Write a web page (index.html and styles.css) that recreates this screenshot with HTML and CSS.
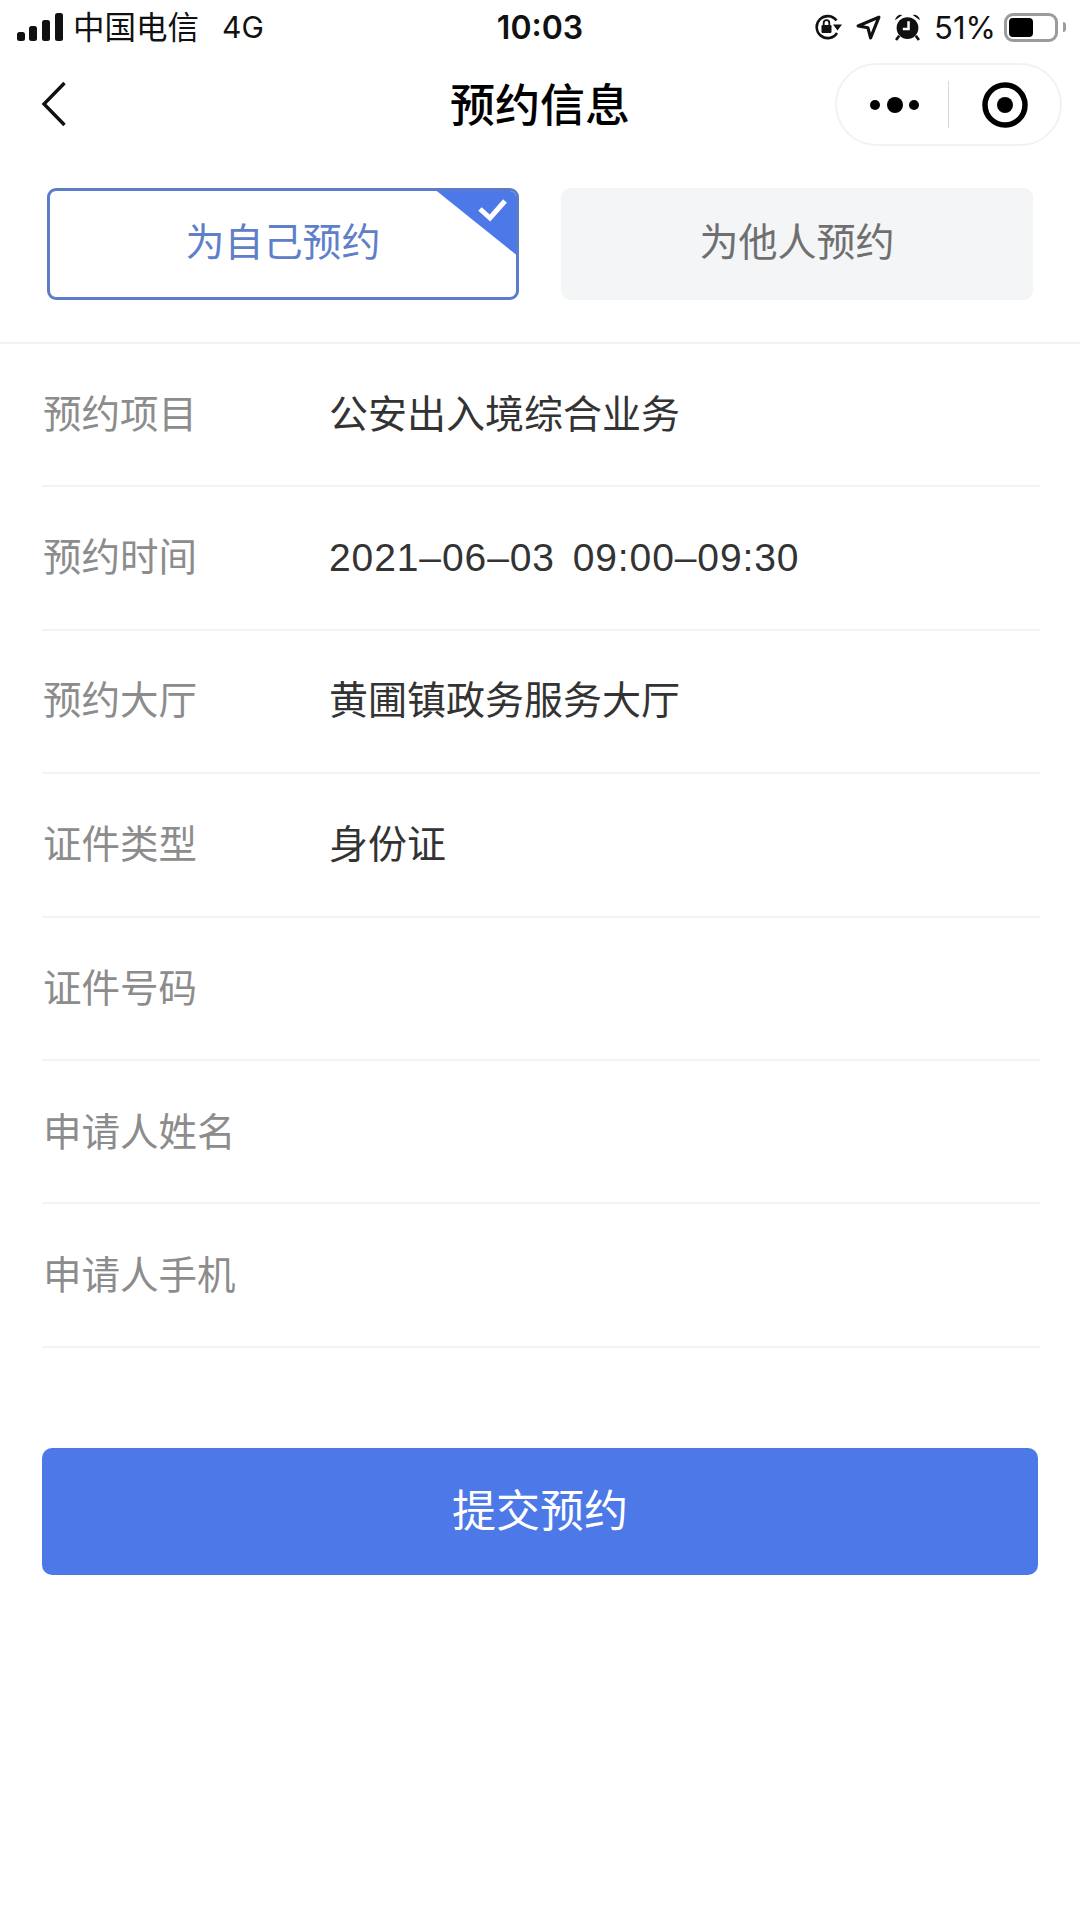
FILE: index.html
```html
<!DOCTYPE html>
<html lang="zh-CN">
<head>
<meta charset="utf-8">
<title>预约信息</title>
<link rel="stylesheet" href="styles.css">
</head>
<body>
<div class="page">
  <header class="status">
    <div class="status-left">
      <svg class="signal" width="46" height="28" viewBox="0 0 46 28"><rect x="0" y="19" width="8" height="9" rx="2.5"/><rect x="12" y="13" width="8" height="15" rx="2.5"/><rect x="25" y="7" width="8" height="21" rx="2.5"/><rect x="38" y="0" width="8" height="28" rx="2.5"/></svg>
      <span class="carrier">中国电信</span>
      <span class="net">4G</span>
    </div>
    <div class="time">10:03</div>
    <div class="status-right">
      <svg class="ico-lock" width="28" height="26" viewBox="0 0 28 26"><path d="M22.5 6.5A11 11 0 1 0 23 19" fill="none" stroke="#111" stroke-width="2.6"/><path d="M19 10.5h9l-4.5 6z" fill="#111"/><rect x="7.5" y="11" width="10" height="8" rx="1.2" fill="#111"/><path d="M9.7 11.5V9a2.8 2.8 0 0 1 5.6 0v2.5" fill="none" stroke="#111" stroke-width="1.8"/></svg>
      <svg class="ico-loc" width="25" height="25" viewBox="0 0 24 24"><path d="M22 2 2 10.5l9.5 1.8L14 22z" fill="none" stroke="#111" stroke-width="3" stroke-linejoin="round"/></svg>
      <svg class="ico-alarm" width="27" height="28" viewBox="0 0 26 27"><circle cx="13" cy="14.5" r="10.5" fill="#111"/><path d="M1 7a5.5 5.5 0 0 1 7-5zM25 7a5.5 5.5 0 0 0-7-5z" fill="#111"/><path d="M5 22l-3 4M21 22l3 4" stroke="#111" stroke-width="2.6"/><path d="M14 8v7.5H8.5" fill="none" stroke="#fff" stroke-width="2.4"/></svg>
      <span class="pct">51%</span>
      <span class="battery"><span class="battery-fill"></span></span>
      <span class="battery-nub"></span>
    </div>
  </header>

  <nav class="nav">
    <svg class="back" width="26" height="46" viewBox="0 0 26 46"><path d="M23.5 2 3 23l20.5 21" fill="none" stroke="#111" stroke-width="3.4"/></svg>
    <h1 class="title">预约信息</h1>
    <div class="capsule">
      <div class="capsule-cell">
        <svg class="capsule-dots" width="50" height="18" viewBox="0 0 50 18"><circle cx="5" cy="9" r="5"/><circle cx="25" cy="9" r="8"/><circle cx="44" cy="9" r="5"/></svg>
      </div>
      <div class="capsule-line"></div>
      <div class="capsule-cell">
        <svg width="46" height="46" viewBox="0 0 46 46"><circle cx="23" cy="23" r="20" fill="none" stroke="#000" stroke-width="5.5"/><circle cx="23" cy="23" r="8"/></svg>
      </div>
    </div>
  </nav>

  <section class="tabs">
    <div class="tab tab-on">为自己预约
      <svg class="corner" width="86" height="69" viewBox="0 0 86 69"><path d="M0 0H86V69z" fill="#4c78e8"/><path d="M47 21l10 9 15-17" fill="none" stroke="#fff" stroke-width="5"/></svg>
    </div>
    <div class="tab tab-off">为他人预约</div>
  </section>

  <section class="form">
    <div class="row"><span class="label">预约项目</span><span class="value">公安出入境综合业务</span></div>
    <div class="row"><span class="label">预约时间</span><span class="value value-date">2021–06–03 09:00–09:30</span></div>
    <div class="row"><span class="label">预约大厅</span><span class="value">黄圃镇政务服务大厅</span></div>
    <div class="row"><span class="label">证件类型</span><span class="value">身份证</span></div>
    <div class="row row-empty"><span class="label">证件号码</span></div>
    <div class="row row-empty"><span class="label">申请人姓名</span></div>
    <div class="row row-empty"><span class="label">申请人手机</span></div>
  </section>

  <button class="submit">提交预约</button>
</div>
</body>
</html>
```
FILE: styles.css
```css
* { box-sizing: border-box; }
html, body { margin: 0; padding: 0; background: #fff; }
body { font-family: "Inter", "Noto Sans CJK SC", sans-serif; color: #111; }
.page { width: 1080px; height: 1920px; overflow: hidden; display: flex; flex-direction: column; }

.status { height: 54px; display: grid; grid-template-columns: 1fr auto 1fr; align-items: center; padding: 0 14px; font-size: 30px; }
.status-left { display: flex; align-items: center; }
.signal { fill: #111; margin: 0 10px 0 3px; }
.carrier { font-size: 31.5px; padding-bottom: 4px; }
.net { margin-left: 23px; font-size: 30px; }
.time { font-size: 32px; font-weight: 600; }
.status-right { display: flex; align-items: center; justify-content: flex-end; }
.ico-lock { margin-right: 14px; }
.ico-loc { margin-right: 13px; }
.ico-alarm { margin-right: 13px; }
.pct { font-size: 31px; margin-right: 8px; }
.battery { width: 54px; height: 29px; border: 3px solid #9b9b9b; border-radius: 9px; padding: 2px; display: block; }
.battery-fill { display: block; width: 24px; height: 100%; background: #000; border-radius: 4px; }
.battery-nub { width: 3px; height: 10px; background: #9b9b9b; margin-left: 5px; border-radius: 0 3px 3px 0; }

.nav { height: 101px; display: flex; align-items: center; justify-content: space-between; padding: 0 18px 0 41px; position: relative; }
.back { margin-bottom: 2px; }
.title { position: absolute; left: 0; right: 0; margin: 0; padding-bottom: 5px; text-align: center; font-size: 45px; font-weight: 500; color: #000; }
.capsule { width: 227px; height: 83px; border: 2px solid #f2f2f2; border-radius: 42px; display: flex; align-items: center; }
.capsule-cell { flex: 1; display: flex; justify-content: center; align-items: center; }
.capsule-cell svg { fill: #000; }
.capsule-dots { margin-left: 4px; }
.capsule-line { width: 1px; height: 47px; background: #d8d8d8; }

.tabs { display: grid; grid-template-columns: 1fr 1fr; gap: 42px; padding: 33px 47px 42px 47px; border-bottom: 2px solid #f2f2f2; }
.tab { height: 112px; border-radius: 9px; display: flex; align-items: center; justify-content: center; padding-bottom: 10px; font-size: 39px; position: relative; overflow: hidden; }
.tab-on { border: 3px solid #5b7cc9; color: #5f80c9; }
.tab-off { background: #f3f5f7; color: #6f6f6f; }
.corner { position: absolute; top: -3px; right: -3px; }

.form { padding: 0 40px 0 42px; }
.row { height: 143.4px; display: flex; align-items: center; padding-bottom: 8px; border-bottom: 2px solid #f3f3f3; font-size: 39px; }
.row-empty { padding-bottom: 6px; }
.label { width: 287px; color: #8c8c8c; flex: none; font-size: 38.5px; padding-left: 1px; }
.value { color: #333; }
.value-date { font-family: "Liberation Sans", "Noto Sans CJK SC", sans-serif; letter-spacing: 0.9px; word-spacing: 6px; padding-top: 7px; }

.submit { margin: 100px 0 0 42px; padding: 0 0 6px; width: 996px; height: 127px; border: 0; border-radius: 10px; background: #4c78e8; color: #fff; font: inherit; font-size: 44px; }
```
